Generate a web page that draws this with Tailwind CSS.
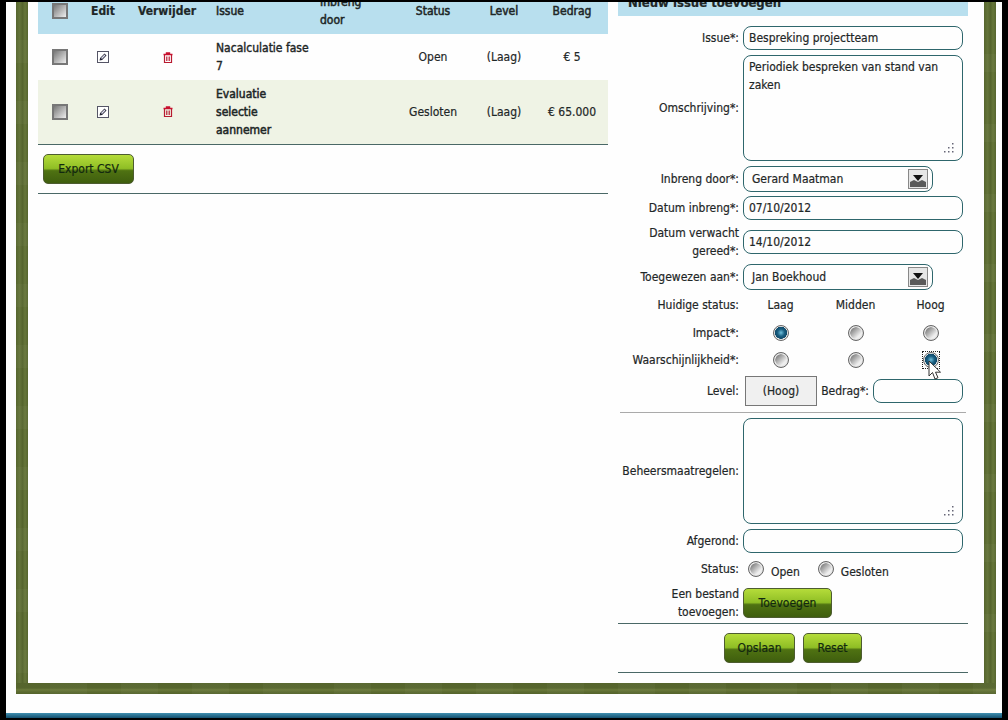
<!DOCTYPE html>
<html lang="nl">
<head>
<meta charset="utf-8">
<title>Nieuw issue toevoegen</title>
<script src="https://cdn.jsdelivr.net/npm/@tailwindcss/browser@4"></script>
</head>
<body class="m-0 bg-black">
<div class="relative w-[1008px] h-[720px] overflow-hidden bg-black pt-[2px] font-['DejaVu_Sans_Condensed','DejaVu_Sans',sans-serif] text-[12px] leading-[18px] text-[#1e2727] [-webkit-text-stroke:0.2px]">
  <div class="mx-[6px] h-[711px] bg-[#fefefe] pl-[10px] pr-[6px]">
    <div class="flex h-[692px] w-[980px] flex-col">
      <div class="flex h-[681px]">
        <div class="w-[12px] shrink-0 bg-[repeating-linear-gradient(to_bottom,#ffffff00_0px,#ffffff00_38px,#ffffff08_38px,#ffffff08_61px),linear-gradient(to_right,#56652e,#64743a_30%,#55642d_55%,#66763a_75%,#56652e)]"></div>
        <div class="flex w-[956px] overflow-hidden bg-[#fefefe] pl-[10px]">

          <!-- left column -->
          <div class="w-[570px] shrink-0 -mt-[14px]">
            <table class="w-[570px] table-fixed border-collapse">
              <colgroup>
                <col class="w-[44px]"><col class="w-[42px]"><col class="w-[86px]"><col class="w-[104px]"><col class="w-[84px]"><col class="w-[70px]"><col class="w-[72px]"><col class="w-[68px]">
              </colgroup>
              <thead>
                <tr class="h-[46px] bg-[#b8dfee] text-center">
                  <th class="font-normal"><span class="mx-auto block h-[16px] w-[16px] border-2 border-[#777] bg-[linear-gradient(135deg,#777,#eee)]"></span></th>
                  <th class="font-bold">Edit</th>
                  <th class="font-bold">Verwijder</th>
                  <th class="pl-[6px] text-left font-normal [-webkit-text-stroke:0.5px]">Issue</th>
                  <th class="pl-[6px] text-left font-normal [-webkit-text-stroke:0.5px]">Inbreng<br>door</th>
                  <th class="font-normal [-webkit-text-stroke:0.5px]">Status</th>
                  <th class="font-normal [-webkit-text-stroke:0.5px]">Level</th>
                  <th class="pr-[4px] font-normal [-webkit-text-stroke:0.5px]">Bedrag</th>
                </tr>
              </thead>
              <tbody class="text-center">
                <tr class="h-[46px]">
                  <td><span class="mx-auto block h-[16px] w-[16px] border-2 border-[#777] bg-[linear-gradient(135deg,#777,#eee)]"></span></td>
                  <td>
                    <svg class="mx-auto block" width="12" height="12" viewBox="0 0 12 12"><rect x=".5" y=".5" width="11" height="11" fill="#fff" stroke="#556"/><path d="M2.500 9.500l.6-2.600L7.500 2.500 9.500 4.500 5.100 8.900z" fill="#223"/><path d="M4 7l3.500-3.500.9.900L5 8z" fill="#dde"/></svg>
                  </td>
                  <td class="pl-[2px]">
                    <svg class="mx-auto block" width="10" height="11" viewBox="0 0 10 11"><path d="M.5 2.500h9M3.500 2.500V1h3v1.500" fill="none" stroke="#c8102e" stroke-width="1.400"/><path d="M1.500 3v7.500h7V3M3.800 4.500v4.500M6.200 4.500v4.500" fill="none" stroke="#b81a30" stroke-width="1.200"/></svg>
                  </td>
                  <td class="pl-[6px] text-left [-webkit-text-stroke:0.4px]">Nacalculatie fase<br>7</td>
                  <td></td>
                  <td>Open</td>
                  <td>(Laag)</td>
                  <td class="pr-[4px]">€ 5</td>
                </tr>
                <tr class="h-[64px] border-b border-[#4a6866] bg-[#eff3e5]">
                  <td><span class="mx-auto block h-[16px] w-[16px] border-2 border-[#777] bg-[linear-gradient(135deg,#777,#eee)]"></span></td>
                  <td>
                    <svg class="mx-auto block" width="12" height="12" viewBox="0 0 12 12"><rect x=".5" y=".5" width="11" height="11" fill="#fff" stroke="#556"/><path d="M2.500 9.500l.6-2.600L7.500 2.500 9.500 4.500 5.100 8.900z" fill="#223"/><path d="M4 7l3.500-3.500.9.900L5 8z" fill="#dde"/></svg>
                  </td>
                  <td class="pl-[2px]">
                    <svg class="mx-auto block" width="10" height="11" viewBox="0 0 10 11"><path d="M.5 2.500h9M3.500 2.500V1h3v1.500" fill="none" stroke="#c8102e" stroke-width="1.400"/><path d="M1.500 3v7.500h7V3M3.800 4.500v4.500M6.200 4.500v4.500" fill="none" stroke="#b81a30" stroke-width="1.200"/></svg>
                  </td>
                  <td class="pl-[6px] text-left [-webkit-text-stroke:0.5px]">Evaluatie<br>selectie<br>aannemer</td>
                  <td></td>
                  <td>Gesloten</td>
                  <td>(Laag)</td>
                  <td class="pr-[4px]">€ 65.000</td>
                </tr>
              </tbody>
            </table>
            <div class="border-b border-[#4a6866] pb-[9px] pl-[5px] pt-[9px]">
              <button class="block h-[30px] w-[91px] rounded-[5px] border border-[#4d5c30] bg-[linear-gradient(to_bottom,#b5dc3a_0%,#8fbe25_48%,#4f7212_56%,#3f5e0e_100%)] text-[#12280f]">Export CSV</button>
            </div>
          </div>

          <!-- right column -->
          <div class="ml-[10px] w-[350px] shrink-0">
            <div class="-mt-[14px] h-[28px] bg-[#b8dfee] pl-[10px] pt-[6px] text-[13px] font-bold leading-[18px]">Nieuw issue toevoegen</div>

            <div class="mt-[10px] flex h-[24px] items-center">
              <span class="w-[121px] text-right">Issue*:</span>
              <input class="ml-[4px] h-[24px] w-[220px] rounded-lg border border-[#2e666c] px-[5px]" value="Bespreking projectteam">
            </div>

            <div class="mt-[5px] flex h-[106px] items-center">
              <span class="w-[121px] text-right">Omschrijving*:</span>
              <div class="relative ml-[4px] h-[106px] w-[220px] rounded-lg border border-[#2e666c]">
                <textarea class="block h-full w-full resize-none rounded-lg px-[5px] py-[2px]">Periodiek bespreken van stand van zaken</textarea>
                <svg class="absolute bottom-[7px] right-[8px]" width="10" height="10" viewBox="0 0 10 10" fill="#667"><rect x="8" y="0" width="1.500" height="1.500"/><rect x="8" y="4" width="1.500" height="1.500"/><rect x="4" y="4" width="1.500" height="1.500"/><rect x="8" y="8" width="1.500" height="1.500"/><rect x="4" y="8" width="1.500" height="1.500"/><rect x="0" y="8" width="1.500" height="1.500"/></svg>
              </div>
            </div>

            <div class="mt-[5px] flex h-[26px] items-center">
              <span class="w-[121px] text-right">Inbreng door*:</span>
              <div class="ml-[4px] flex h-[26px] w-[190px] items-center justify-between rounded-lg border border-[#2e666c] pl-[8px] pr-[4px]">
                <span>Gerard Maatman</span>
                <svg width="20" height="20" viewBox="0 0 20 20"><rect x=".5" y=".5" width="19" height="19" fill="#e6e6e6" stroke="#888"/><path d="M2 18v-5l4-2 4 2 4-2 4 2v5z" fill="#5a5a5a"/><path d="M5 6h10l-5 6z" fill="#111"/></svg>
              </div>
            </div>

            <div class="mt-[4px] flex h-[24px] items-center">
              <span class="w-[121px] text-right">Datum inbreng*:</span>
              <input class="ml-[4px] h-[24px] w-[220px] rounded-lg border border-[#2e666c] px-[5px]" value="07/10/2012">
            </div>

            <div class="mt-[10px] flex h-[24px] items-center">
              <span class="w-[121px] text-right">Datum verwacht<br>gereed*:</span>
              <input class="ml-[4px] h-[24px] w-[220px] rounded-lg border border-[#2e666c] px-[5px]" value="14/10/2012">
            </div>

            <div class="mt-[10px] flex h-[26px] items-center">
              <span class="w-[121px] text-right">Toegewezen aan*:</span>
              <div class="ml-[4px] flex h-[26px] w-[190px] items-center justify-between rounded-lg border border-[#2e666c] pl-[8px] pr-[4px]">
                <span>Jan Boekhoud</span>
                <svg width="20" height="20" viewBox="0 0 20 20"><rect x=".5" y=".5" width="19" height="19" fill="#e6e6e6" stroke="#888"/><path d="M2 18v-5l4-2 4 2 4-2 4 2v5z" fill="#5a5a5a"/><path d="M5 6h10l-5 6z" fill="#111"/></svg>
              </div>
            </div>

            <div class="mt-[6px] flex h-[18px] items-center">
              <span class="w-[121px] text-right">Huidige status:</span>
              <div class="ml-[4px] grid w-[225px] grid-cols-3 text-center">
                <span>Laag</span><span>Midden</span><span>Hoog</span>
              </div>
            </div>

            <div class="mt-[10px] flex h-[18px] items-center">
              <span class="w-[121px] text-right">Impact*:</span>
              <div class="ml-[4px] grid w-[225px] grid-cols-3">
                <span class="mx-auto block h-[16px] w-[16px] rounded-full border border-[#666] bg-[radial-gradient(circle_at_50%_48%,#6fc0dc_0,#1a5f82_35%,#0f4a6a_58%,#e8e8e8_62%)]"></span>
                <span class="mx-auto block h-[16px] w-[16px] rounded-full border border-[#666] bg-[radial-gradient(circle,#ffffff00_55%,#e8e8e8_60%,#bbb_100%),linear-gradient(135deg,#555,#eee_70%)]"></span>
                <span class="mx-auto block h-[16px] w-[16px] rounded-full border border-[#666] bg-[radial-gradient(circle,#ffffff00_55%,#e8e8e8_60%,#bbb_100%),linear-gradient(135deg,#555,#eee_70%)]"></span>
              </div>
            </div>

            <div class="mt-[9px] flex h-[18px] items-center">
              <span class="w-[121px] text-right">Waarschijnlijkheid*:</span>
              <div class="ml-[4px] grid w-[225px] grid-cols-3">
                <span class="mx-auto block h-[16px] w-[16px] rounded-full border border-[#666] bg-[radial-gradient(circle,#ffffff00_55%,#e8e8e8_60%,#bbb_100%),linear-gradient(135deg,#555,#eee_70%)]"></span>
                <span class="mx-auto block h-[16px] w-[16px] rounded-full border border-[#666] bg-[radial-gradient(circle,#ffffff00_55%,#e8e8e8_60%,#bbb_100%),linear-gradient(135deg,#555,#eee_70%)]"></span>
                <span class="mx-auto block h-[16px] w-[16px] outline-1 outline-dotted outline-[#222]"><span class="block h-[16px] w-[16px] rounded-full border border-[#666] bg-[radial-gradient(circle_at_50%_48%,#6fc0dc_0,#1a5f82_35%,#0f4a6a_58%,#e8e8e8_62%)]"></span></span>
              </div>
            </div>

            <div class="mt-[7px] flex h-[30px] items-center">
              <span class="w-[121px] text-right">Level:</span>
              <span class="ml-[6px] flex h-[30px] w-[72px] items-center justify-center border border-[#777] bg-[#f0f0f0]">(Hoog)</span>
              <span class="ml-[1px] w-[51px] text-right">Bedrag*:</span>
              <input class="ml-[4px] h-[24px] w-[90px] rounded-lg border border-[#2e666c] px-[5px]">
            </div>

            <div class="ml-[2px] mt-[6px] w-[346px] border-t border-[#aaa]"></div>

            <div class="mt-[5px] flex h-[106px] items-center">
              <span class="w-[121px] text-right">Beheersmaatregelen:</span>
              <div class="relative ml-[4px] h-[106px] w-[220px] rounded-lg border border-[#2e666c]">
                <textarea class="block h-full w-full resize-none rounded-lg px-[5px] py-[2px]"></textarea>
                <svg class="absolute bottom-[7px] right-[8px]" width="10" height="10" viewBox="0 0 10 10" fill="#667"><rect x="8" y="0" width="1.500" height="1.500"/><rect x="8" y="4" width="1.500" height="1.500"/><rect x="4" y="4" width="1.500" height="1.500"/><rect x="8" y="8" width="1.500" height="1.500"/><rect x="4" y="8" width="1.500" height="1.500"/><rect x="0" y="8" width="1.500" height="1.500"/></svg>
              </div>
            </div>

            <div class="mt-[5px] flex h-[24px] items-center">
              <span class="w-[121px] text-right">Afgerond:</span>
              <input class="ml-[4px] h-[24px] w-[220px] rounded-lg border border-[#2e666c] px-[5px]">
            </div>

            <div class="mt-[7px] flex h-[18px] items-center">
              <span class="w-[121px] text-right">Status:</span>
              <span class="ml-[9px] block h-[16px] w-[16px] rounded-full border border-[#666] bg-[radial-gradient(circle,#ffffff00_55%,#e8e8e8_60%,#bbb_100%),linear-gradient(135deg,#555,#eee_70%)]"></span>
              <span class="ml-[7px] mt-[5px]">Open</span>
              <span class="ml-[18px] block h-[16px] w-[16px] rounded-full border border-[#666] bg-[radial-gradient(circle,#ffffff00_55%,#e8e8e8_60%,#bbb_100%),linear-gradient(135deg,#555,#eee_70%)]"></span>
              <span class="ml-[7px] mt-[5px]">Gesloten</span>
            </div>

            <div class="mt-[7px] flex h-[36px] items-center">
              <span class="w-[121px] text-right">Een bestand<br>toevoegen:</span>
              <button class="ml-[4px] h-[30px] w-[89px] rounded-[5px] border border-[#4d5c30] bg-[linear-gradient(to_bottom,#b5dc3a_0%,#8fbe25_48%,#4f7212_56%,#3f5e0e_100%)] text-[#12280f]">Toevoegen</button>
            </div>

            <div class="mt-[2px] flex h-[50px] items-center justify-center gap-[8px] border-y border-[#4a6866]">
              <button class="h-[30px] w-[71px] rounded-[5px] border border-[#4d5c30] bg-[linear-gradient(to_bottom,#b5dc3a_0%,#8fbe25_48%,#4f7212_56%,#3f5e0e_100%)] text-[#12280f]">Opslaan</button>
              <button class="h-[30px] w-[59px] rounded-[5px] border border-[#4d5c30] bg-[linear-gradient(to_bottom,#b5dc3a_0%,#8fbe25_48%,#4f7212_56%,#3f5e0e_100%)] text-[#12280f]">Reset</button>
            </div>
          </div>
        </div>
        <div class="w-[12px] shrink-0 bg-[repeating-linear-gradient(to_bottom,#ffffff00_0px,#ffffff00_52px,#ffffff08_52px,#ffffff08_70px),linear-gradient(to_right,#56652e,#64743a_30%,#55642d_55%,#66763a_75%,#56652e)]"></div>
      </div>
      <div class="h-[11px] shrink-0 bg-[repeating-linear-gradient(to_right,#ffffff00_0px,#ffffff00_34px,#ffffff08_34px,#ffffff08_71px),linear-gradient(to_bottom,#55642c,#56652d_45%,#6a793a_62%,#5b6a30_82%,#55642c)]"></div>
    </div>
  </div>
  <div class="mx-[6px] h-[5px] bg-[linear-gradient(to_bottom,#3f8fb0,#14506f)]"></div>

  <!-- mouse cursor over the selected radio -->
  <svg class="absolute left-[928px] top-[360px]" width="15" height="21" viewBox="0 0 15 21"><path d="M1 1v15l3.500-3.500L7 19l3-1.300-2.500-5.500H12.500z" fill="#fff" stroke="#333" stroke-width="1"/></svg>
</div>
</body>
</html>
